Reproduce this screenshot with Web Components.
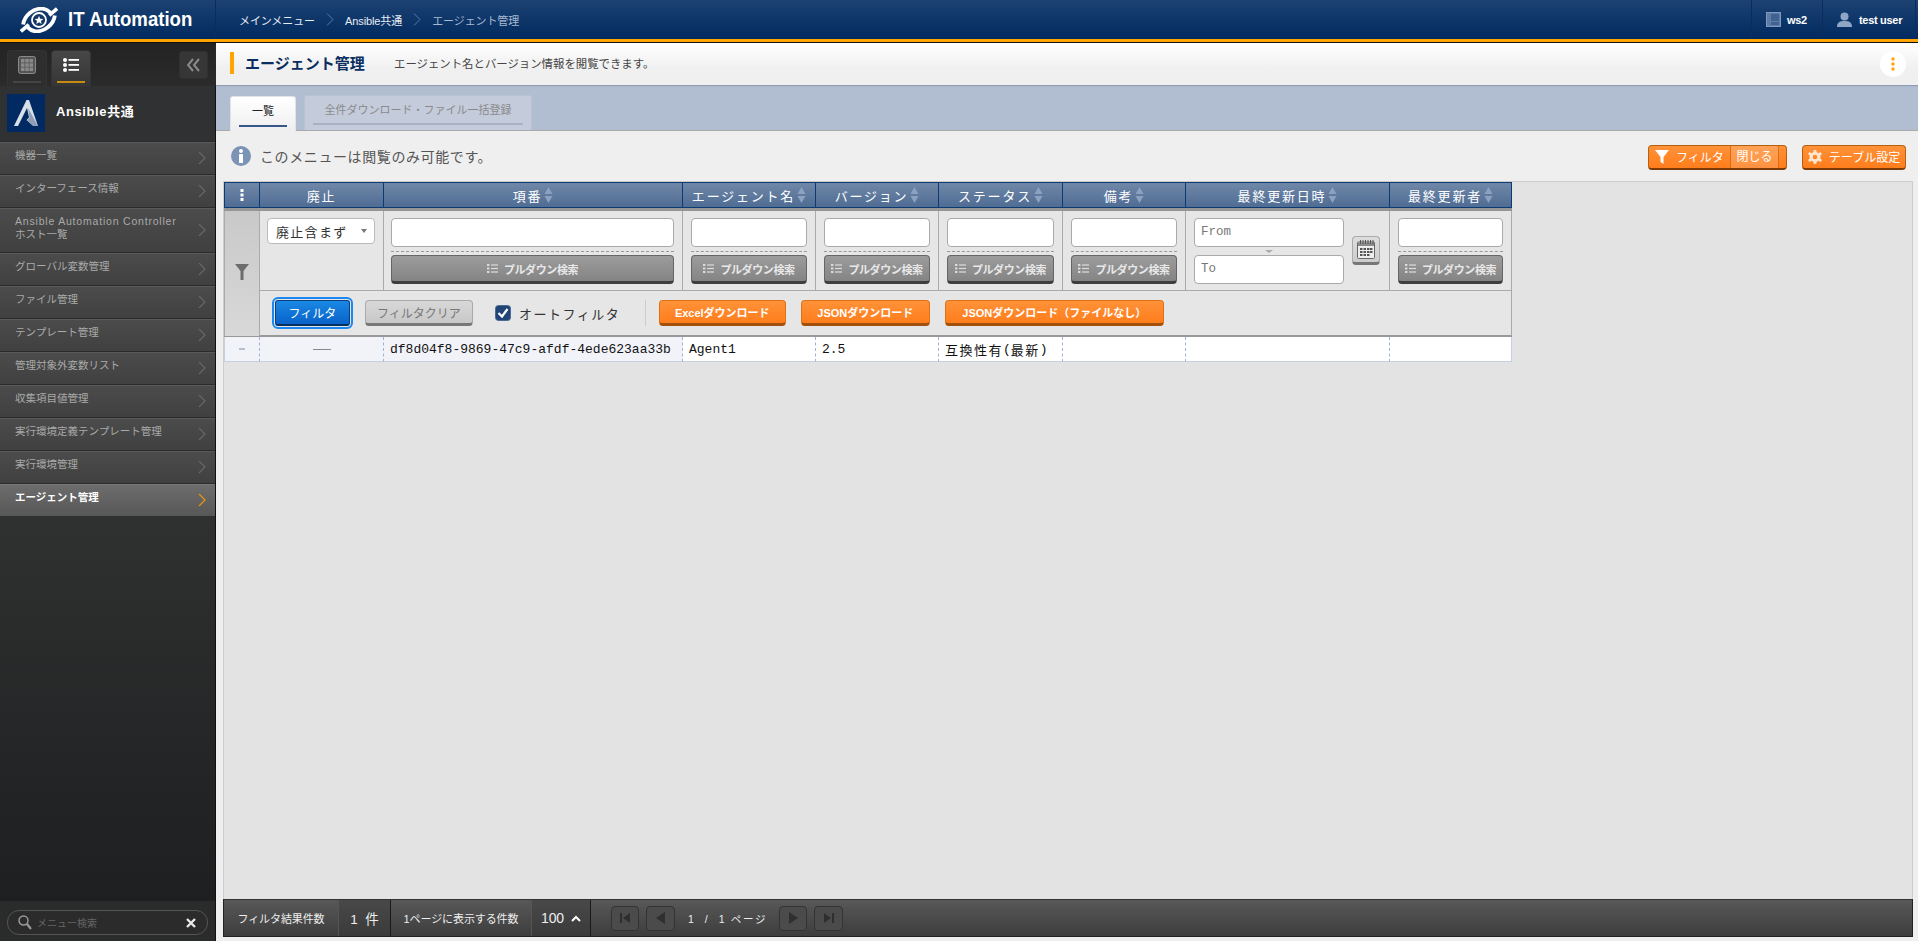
<!DOCTYPE html>
<html lang="ja"><head><meta charset="utf-8"><style>
html,body{margin:0;height:941px;overflow:hidden;background:#efefef}
body{font-family:"Liberation Sans","Noto Sans CJK JP",sans-serif}
</style></head><body>
<ita-app></ita-app>
<script>
const SANS='"Liberation Sans","Noto Sans CJK JP",sans-serif';
const MONO='"Liberation Mono","Noto Sans CJK JP",monospace';
function el(name,html,css){
  customElements.define(name,class extends HTMLElement{
    constructor(){super();const r=this.attachShadow({mode:'open'});
      r.innerHTML='<style>'+css+'</style>'+html;}
  });
}
const chev=c=>`<svg width="8" height="13" viewBox="0 0 8 13" fill="none" stroke="${c}" stroke-width="1"><path d="M1 .5 L7 6.500 L1 12.500"/></svg>`;
const pullIcon=`<svg width="11" height="11" viewBox="0 0 11 11" fill="#dcdcdc"><rect x="0" y="1" width="2.400" height="2"/><rect x="0" y="4.500" width="2.400" height="2"/><rect x="0" y="8" width="2.400" height="2"/><rect x="4" y="1.400" width="7" height="1.200"/><rect x="4" y="4.900" width="7" height="1.200"/><rect x="4" y="8.400" width="7" height="1.200"/></svg>`;
const sortIcon=`<svg width="9" height="16" viewBox="0 0 9 16" fill="#8ba2c1"><path d="M4.500 0 L8.500 7 H.5 Z M4.500 16 L8.500 9 H.5 Z"/></svg>`;

el('ita-btn',`<slot></slot>`,`
:host{display:inline-flex;align-items:center;justify-content:center;box-sizing:border-box;height:26px;border-radius:4px;font:bold 11px ${SANS};color:#fff;white-space:nowrap;gap:6px;flex:none;letter-spacing:0;
 background:linear-gradient(#ff9238,#ff7d1c);border:1px solid #e07015;border-bottom:3px solid #a3500c}
:host([kind=blue]){background:linear-gradient(#1a88e4,#0963c9);border:1px solid #0a3d82;border-bottom:2px solid #06305f;outline:2px solid #1a88f0;outline-offset:1px;font-weight:normal;font-size:12px;border-radius:3px}
:host([kind=gray]){background:linear-gradient(#d8d8d8,#c8c8c8);border:1px solid #aaa;border-bottom:3px solid #777;color:#777;font-weight:normal;font-size:12px}
:host([kind=pull]){display:flex;height:29px;background:linear-gradient(#9c9c9c,#848484);border:1px solid #666;border-bottom:3px solid #3e3e3e;color:#e8e8e8;letter-spacing:-.4px}
`);

el('ita-header',`
<div class="bar">
<div class="logo">
<svg width="38" height="26" viewBox="3 1.500 32 23"><g fill="none" stroke="#fff" stroke-linecap="butt"><path d="M5 17 C6 9 14 2.500 22 3 C25 3.200 27 4.500 29 6.500" stroke-width="3.400"/><path d="M33 9 C32 17 24 23.500 16 23 C13 22.800 11 21.500 9 19.500" stroke-width="3.400"/><path d="M28 9 L35 3" stroke-width="3.200"/><path d="M10 17 L3 23" stroke-width="3.200"/></g><circle cx="19" cy="13" r="6.200" fill="#143766" stroke="#fff" stroke-width="1.600"/><path d="M19 9.300 L20 12 L22.800 12.200 L20.700 13.900 L21.400 16.600 L19 15.100 L16.600 16.600 L17.300 13.900 L15.200 12.200 L18 12 Z" fill="#fff"/></svg>
<b>IT Automation</b></div>
<nav><span>メインメニュー</span>${chev('#5d7aa5')}<span>Ansible共通</span>${chev('#5d7aa5')}<span class="cur">エージェント管理</span></nav>
<div class="r"><span class="it w"><svg width="15" height="15" viewBox="0 0 15 15"><rect x=".5" y=".5" width="14" height="14" fill="#5d7ca6" stroke="#7f9abd"/><rect x="5" y="2" width="8" height="7" fill="#3f6290"/><rect x="5" y="10" width="8" height="3" fill="#3f6290"/></svg>ws2</span>
<span class="it u"><svg width="15" height="15" viewBox="0 0 15 15" fill="#8fa6c6"><circle cx="7.500" cy="4.500" r="4"/><path d="M0 15 C0 10 3 9 7.500 9 C12 9 15 10 15 15 Z"/></svg>test user</span></div>
</div>`,`
:host{display:block;height:43px;box-sizing:border-box;border-bottom:1px solid #111;font:11px ${SANS};color:#fff;flex:none}
.bar{display:flex;height:39px;background:linear-gradient(#1d4272,#002a60);border-bottom:3px solid #ffa500}
.logo{width:216px;box-sizing:border-box;padding-left:20px;display:flex;align-items:center;gap:10px;border-right:1px solid #0e2c58}
.logo b{font:bold 20px "Liberation Sans";transform:scaleX(.93);transform-origin:left;white-space:nowrap}
nav{flex:1;display:flex;align-items:center;padding-left:23px;color:#e8edf5;letter-spacing:-.1px}
nav svg{margin:0 11px}
nav .cur{color:#a9b9d0}
.r{display:flex}
.it{display:flex;align-items:center;gap:7px;box-sizing:border-box;border-left:1px solid #0e2c58;font:bold 11px ${SANS};letter-spacing:-.3px}
.w{width:71px;padding-left:14px}.w svg{margin-right:-1px}.u{width:94px;padding-left:14px;border-right:1px solid #0e2c58;margin-right:2px}
`);

el('ita-menu-item',`<span class="t"><slot></slot></span><svg class="c" width="8" height="13" viewBox="0 0 8 13" fill="none" stroke-width="1.200"><path d="M1 .5 L7 6.500 L1 12.500"/></svg>`,`
:host{display:flex;align-items:center;box-sizing:border-box;min-height:33px;padding:6.500px 9px 11.500px 15px;border-top:1px solid #2b2b2b;box-shadow:inset 0 1px 0 #5a5a5a;
 background:linear-gradient(#4b4c4b,#3f403f);color:#aaa;font:10.500px/13px ${SANS}}
.t{flex:1}
.c{stroke:#666;flex:none;transform:translateY(2.500px)}
:host([active]){background:linear-gradient(#6c6d6c,#565756);color:#fff;font-weight:bold;box-shadow:inset 0 1px 0 #777,0 2px 0 #333}
:host([active]) .c{stroke:#e8960c}
`);

el('ita-sidebar',`
<div class="tabs">
<div class="tab"><svg width="18" height="18" viewBox="0 0 18 18"><rect x=".5" y=".5" width="17" height="17" rx="2" fill="#555" stroke="#8a8a8a"/><g fill="#8a8a8a"><rect x="3" y="3" width="3.500" height="3.500"/><rect x="7.300" y="3" width="3.500" height="3.500"/><rect x="11.500" y="3" width="3.500" height="3.500"/><rect x="3" y="7.300" width="3.500" height="3.500"/><rect x="7.300" y="7.300" width="3.500" height="3.500"/><rect x="11.500" y="7.300" width="3.500" height="3.500"/><rect x="3" y="11.500" width="3.500" height="3.500"/><rect x="7.300" y="11.500" width="3.500" height="3.500"/><rect x="11.500" y="11.500" width="3.500" height="3.500"/></g></svg></div>
<div class="tab on"><svg width="16" height="14" viewBox="0 0 16 14" fill="#fff"><circle cx="2" cy="2" r="2"/><circle cx="2" cy="7" r="2"/><circle cx="2" cy="12" r="2"/><rect x="5.500" y="1" width="10.500" height="1.800"/><rect x="5.500" y="6" width="10.500" height="1.800"/><rect x="5.500" y="11" width="10.500" height="1.800"/></svg></div>
<div class="coll"><svg width="13" height="14" viewBox="0 0 13 14" fill="none" stroke="#8a8a8a" stroke-width="2"><path d="M6 1 L1 7 L6 13 M12 1 L7 7 L12 13"/></svg></div>
</div>
<div class="group"><div class="ic"><svg width="24" height="26" viewBox="0 0 24 26"><path d="M12.500 0 L15 0 L24 26 L19.500 26 L12.500 20 L15 17.500 L13 8 L4 26 L0 26 Z" fill="#d8dfe9"/><path d="M14 8 L24 26 L19 26 L13 20 L15.500 18 Z" fill="#8f9fb8"/></svg></div><b>Ansible共通</b></div>
<div class="menu"><slot></slot></div>
<div class="fill"></div>
<div class="search"><div class="box"><svg width="14" height="15" viewBox="0 0 14 15" fill="none" stroke="#999" stroke-width="1.500"><circle cx="5.500" cy="5.500" r="4.500"/><path d="M9 9 L13 14" stroke-width="2.200"/></svg><span>メニュー検索</span><svg width="10" height="10" viewBox="0 0 10 10" stroke="#e8e8e8" stroke-width="2.400"><path d="M1 1 L9 9 M9 1 L1 9"/></svg></div></div>
`,`
:host{display:flex;flex-direction:column;width:215px;flex:none;background:#2a2b2b;border-right:1px solid #111;font:11px ${SANS}}
.tabs{display:flex;height:43px;box-sizing:border-box;padding:7px 7px 0 7px;gap:4px;background:linear-gradient(#232323,#2b2b2b);flex:none}
.tab{width:40px;height:36px;box-sizing:border-box;border:1px solid #333;border-bottom:0;border-radius:4px 4px 0 0;background:#2e2e2e;display:flex;align-items:center;justify-content:center;padding-bottom:7px;position:relative}
.tab::after{content:"";position:absolute;left:5px;right:5px;bottom:3px;height:2px;background:#444}
.tab.on{background:linear-gradient(#474747,#363636)}
.tab.on::after{background:#c88a10}
.coll{margin-left:auto;width:29px;height:28px;margin-top:1px;background:#363636;border:1px solid #303030;border-radius:3px;box-sizing:border-box;display:flex;align-items:center;justify-content:center}
.group{display:flex;align-items:center;height:55px;box-sizing:border-box;padding-left:7px;gap:11px;background:#303132;color:#fff;font-size:13px;flex:none}
.group b{letter-spacing:.6px;margin-top:-6px}
.ic{width:38px;height:38px;background:#012a63;display:flex;align-items:center;justify-content:center;margin-top:-2px}
.menu{flex:none}
.fill{flex:1;background:linear-gradient(#2f3030,#1e1f20)}
.search{height:40px;box-sizing:border-box;background:#2a2b2b;padding:9px 7px 6px;flex:none}
.box{height:25px;box-sizing:border-box;border:1px solid #555;border-radius:12px;background:#2b2b2b;display:flex;align-items:center;padding:0 11px 0 10px;gap:5px;color:#666;font-size:10px}
.box span{flex:1}
`);

el('ita-title',`<i></i><h1>エージェント管理</h1><p>エージェント名とバージョン情報を閲覧できます。</p><div class="k"><svg width="4" height="14" viewBox="0 0 4 14" fill="#ffa500"><circle cx="2" cy="2" r="1.700"/><circle cx="2" cy="7" r="1.700"/><circle cx="2" cy="12" r="1.700"/></svg></div>`,`
:host{display:flex;align-items:center;height:42px;box-sizing:border-box;flex:none;padding:0 12px 0 14px;background:linear-gradient(#fff,#f0f0f0 60%);box-shadow:0 1px 1px #8f9cb3;position:relative}
i{width:4px;height:22px;background:#ffa500;flex:none;margin-right:11px;margin-top:-2px}
h1{margin:-3px 0 0;font:bold 15px ${SANS};color:#0a2e60;width:149px}
p{margin:-2px 0 0;font:11.400px ${SANS};color:#444;flex:1}
.k{width:26px;height:26px;border-radius:50%;background:#fff;display:flex;align-items:center;justify-content:center}
`);

el('ita-tabs',`<div class="tb a"><span>一覧</span></div><div class="tb"><span>全件ダウンロード・ファイル一括登録</span></div>`,`
:host{display:flex;height:46px;box-sizing:border-box;flex:none;background:#b1bdd0;border-bottom:1px solid #aaa;padding:10px 0 0 14px;gap:8px;align-items:flex-end;font:11px ${SANS}}
.tb{height:35px;width:228px;box-sizing:border-box;border-radius:3px 3px 0 0;background:#c4ccdb;color:#8a8a8a;padding:0 8px;border:1px solid #bac3d4;border-bottom:0}
.tb span{display:block;text-align:center;height:29px;line-height:29px;border-bottom:2px solid #a9b2c3;box-sizing:border-box}
.a{width:66px;background:linear-gradient(#fff,#eee);color:#222;border-color:#dfe3ea;position:relative;top:1px}
.a span{border-bottom:2px solid #37568a;height:30px;line-height:29px}
`);

el('ita-info',`<svg width="20" height="20" viewBox="0 0 20 20"><circle cx="10" cy="10" r="10" fill="#7b93b5"/><circle cx="10" cy="5" r="2" fill="#fff"/><rect x="8" y="8" width="4" height="9" rx=".5" fill="#fff"/></svg><span>このメニューは閲覧のみ可能です。</span><div class="sp"></div>
<ita-btn class="b1"><svg width="14" height="14" viewBox="0 0 14 14" fill="#fff"><path d="M0 0 H14 L8.500 7 V14 L5.500 12 V7 Z"/></svg><span class="f">フィルタ</span><span class="cl">閉じる</span></ita-btn>
<ita-btn class="b2"><svg width="14" height="14" viewBox="0 0 24 24" fill="#ffe7cf"><path d="M10 0 H14 L15 4 L18 5.500 L21.500 3.500 L24 7 L21 9.500 L21.500 12 L21 14.500 L24 17 L21.500 20.500 L18 18.500 L15 20 L14 24 H10 L9 20 L6 18.500 L2.500 20.500 L0 17 L3 14.500 L2.500 12 L3 9.500 L0 7 L2.500 3.500 L6 5.500 L9 4 Z M12 8 A4 4 0 1 0 12 16 A4 4 0 1 0 12 8 Z" fill-rule="evenodd"/></svg><span>テーブル設定</span></ita-btn>`,`
:host{display:flex;align-items:center;height:50px;box-sizing:border-box;flex:none;padding:0 12px 1px 15px;font:14px ${SANS};color:#555}
svg{flex:none}
:host>span{margin-left:9px;letter-spacing:.6px}
.sp{flex:1}
ita-btn{font-weight:normal;font-size:12px;height:25px;border-color:#b5600f;border-bottom:2px solid #7b3a06;margin-top:3px}
.b1{width:139px;justify-content:flex-start;padding-left:6px;gap:7px;padding-right:7px}
.f{width:47px}.cl{width:50px;height:22px;line-height:22px;text-align:center;background:rgba(255,255,255,.16);border-left:1px solid #d86f15;border-right:1px solid #d86f15}
.b2{width:104px;margin-left:15px;gap:7px}
`);

const cols=`36px 124px 299px 133px 123px 124px 123px 204px 122px`;
const th=(t,s=1)=>`<div class="th"><span>${t}</span>${s?sortIcon:''}</div>`;
const pull=(c='')=>`<div class="fc ${c}"><div class="inp"></div><div class="dash"></div><ita-btn kind="pull">${pullIcon}<span>プルダウン検索</span></ita-btn></div>`;
el('ita-table',`
<div class="g">
<div class="th"><svg width="4" height="12" viewBox="0 0 4 12" fill="#fff"><rect width="3" height="3" x=".5" y="0"/><rect width="3" height="3" x=".5" y="4.500"/><rect width="3" height="3" x=".5" y="9"/></svg></div>
${th('廃止',0)}${th('項番')}${th('エージェント名')}${th('バージョン')}${th('ステータス')}${th('備考')}${th('最終更新日時')}${th('最終更新者')}
<div class="stripe"></div>
<div class="side"><svg width="14" height="16" viewBox="0 0 14 16" fill="#6d6d6d"><path d="M0 0 H14 L8.500 7 V16 H5.500 V7 Z"/></svg></div>
<div class="fc sel"><div class="select"><span>廃止含まず</span><svg width="6" height="4" viewBox="0 0 6 4" fill="#777"><path d="M0 0 H6 L3 4 Z"/></svg></div></div>
${pull('sel')}${pull()}${pull()}${pull()}${pull()}
<div class="fc date"><div class="dl"><div class="inp ph">From</div><div class="tri"></div><div class="inp ph">To</div></div><div class="cal"><svg width="18" height="19" viewBox="0 0 18 19"><rect x=".5" y="2" width="17" height="16.500" rx="1" fill="#eee" stroke="#666"/><rect x="1" y="2.500" width="16" height="3.500" fill="#8b8b8b"/><g stroke="#555"><path d="M3.500 0 V4 M6 0 V4 M8.500 0 V4 M11 0 V4 M13.500 0 V4 M16 0 V4" stroke-width="1"/></g><g fill="#555"><rect x="3" y="8" width="2.500" height="2"/><rect x="6.500" y="8" width="2.500" height="2"/><rect x="10" y="8" width="2.500" height="2"/><rect x="13" y="8" width="2.500" height="2"/><rect x="3" y="11" width="2.500" height="2"/><rect x="6.500" y="11" width="2.500" height="2"/><rect x="10" y="11" width="2.500" height="2"/><rect x="13" y="11" width="2.500" height="2"/><rect x="3" y="14" width="2.500" height="2"/><rect x="6.500" y="14" width="2.500" height="2"/><rect x="10" y="14" width="2.500" height="2"/></g></svg></div></div>
${pull()}
<div class="act">
<ita-btn kind="blue" style="width:75px">フィルタ</ita-btn>
<ita-btn kind="gray" style="width:108px;margin-left:15px">フィルタクリア</ita-btn>
<label><svg width="16" height="16" viewBox="0 0 16 16"><rect x=".5" y=".5" width="15" height="15" rx="3" fill="#1e4478" stroke="#4d6a94"/><path d="M3.500 8 L7 11.500 L12.500 4" fill="none" stroke="#fff" stroke-width="2.200"/></svg><span>オートフィルタ</span></label>
<i></i>
<ita-btn style="width:127px">Excelダウンロード</ita-btn>
<ita-btn style="width:129px;margin-left:15px">JSONダウンロード</ita-btn>
<ita-btn style="width:219px;margin-left:15px">JSONダウンロード（ファイルなし）</ita-btn>
</div>
<div class="line"></div>
<div class="td alt c"><b class="d1"></b></div><div class="td alt c"><b class="d2"></b></div>
<div class="td alt m">df8d04f8-9869-47c9-afdf-4ede623aa33b</div>
<div class="td m">Agent1</div><div class="td m">2.5</div>
<div class="td st"><span>互換性有</span><span class="m">(</span><span>最新</span><span class="m">)</span></div>
<div class="td"></div><div class="td"></div><div class="td"></div>
</div>`,`
:host{display:block;font:13px ${MONO};letter-spacing:1.300px}
.g{display:grid;grid-template-columns:${cols};grid-template-rows:26px 3px 80px 45px 1px 25px;width:1288px}
.th{display:flex;align-items:center;justify-content:center;gap:2px;color:#fff;background:linear-gradient(#7088a8,#4f6c93);border:1px solid #0c3a72;border-left:0;box-sizing:border-box;white-space:nowrap;letter-spacing:1.800px}
.th:first-child{border-left:1px solid #0c3a72}
.stripe{grid-column:1/-1;background:#969696}
.side{grid-row:3/5;background:linear-gradient(#c9c9c9,#d8d8d8);border-right:1px solid #aaa;border-left:1px solid #aaa;display:flex;align-items:center;justify-content:center;padding-bottom:4px;box-sizing:border-box}
.fc{background:#e6e6e6;border-right:1px solid #aaa;border-bottom:1px solid #aaa;box-sizing:border-box;padding:7px 8px 0 8px;display:flex;flex-direction:column}
.sel{padding-left:7px}
.inp{height:29px;box-sizing:border-box;background:#fff;border:1px solid #aaa;border-radius:4px;flex:none;letter-spacing:0}
.ph{font:12.500px/27px ${MONO};color:#777;padding-left:6px;letter-spacing:0}
.dash{border-top:1px dashed #999;margin:4px 0 3px;height:0;flex:none}
.select{height:26px;box-sizing:border-box;background:#fff;border:1px solid #bbb;border-radius:4px;display:flex;align-items:center;justify-content:space-between;padding:0 7px 0 8px;color:#333}
.date{flex-direction:row;align-items:center;padding-top:0;gap:8px}
.dl{width:150px;padding-top:7px;align-self:flex-start;display:flex;flex-direction:column}
.tri{width:0;height:0;border:4px solid transparent;border-top:3px solid #aaa;border-bottom:0;align-self:center;margin:2.500px 0}
.cal{width:28px;height:29px;box-sizing:border-box;border:1px solid #aaa;border-bottom:3px solid #777;border-radius:4px;background:linear-gradient(#ddd,#ccc);display:flex;align-items:center;justify-content:center}
.act{grid-column:2/-1;background:#e6e6e6;border-right:1px solid #aaa;box-sizing:border-box;display:flex;align-items:center;padding:0 0 0 15px;border-bottom:1px solid #999}
label{display:flex;align-items:center;gap:8px;margin-left:22px;color:#333;letter-spacing:1.500px}
.act i{width:1px;height:26px;background:#ccc;margin:0 13px 0 24.500px;flex:none}
.line{grid-column:1/-1;background:#999}
.td{background:#fff;border-right:1px dashed #9fb4d0;border-bottom:1px solid #c5d0e0;box-sizing:border-box;padding:0 5px 0 6px;display:flex;align-items:center;color:#111;white-space:nowrap}
.td:nth-last-child(9){border-left:1px solid #c5d0e0}
.td:last-child{border-right:1px solid #c5d0e0}
.alt{background:#f1f3f9}
.c{justify-content:center;padding:0}
.m{font-family:${MONO};letter-spacing:0}
.st{letter-spacing:1.500px}
.d1{width:6px;height:2px;background:#b6c0d0}.d2{width:18px;height:1px;background:#888}
`);

el('ita-pager',`
<div class="c l" style="width:114px">フィルタ結果件数</div><div class="c n" style="width:53px">1&nbsp;&nbsp;件</div>
<div class="c l" style="width:140px">1ページに表示する件数</div><div class="c n h" style="width:60px">100<svg width="10" height="7" viewBox="0 0 10 7" fill="none" stroke="#fff" stroke-width="2"><path d="M1 6 L5 2 L9 6"/></svg></div>
<div class="pg">
<span class="b"><svg width="12" height="12" viewBox="0 0 12 12" fill="#2f2f2f"><rect x="1" y="1" width="2" height="10"/><path d="M11 1 V11 L4 6 Z"/></svg></span>
<span class="b b2"><svg width="10" height="12" viewBox="0 0 10 12" fill="#2f2f2f"><path d="M9 0 V12 L0 6 Z"/></svg></span>
<span class="t">1&nbsp; /&nbsp; 1 ページ</span>
<span class="b"><svg width="10" height="12" viewBox="0 0 10 12" fill="#2f2f2f"><path d="M1 0 V12 L10 6 Z"/></svg></span>
<span class="b b2"><svg width="12" height="12" viewBox="0 0 12 12" fill="#2f2f2f"><path d="M1 1 V11 L8 6 Z"/><rect x="9" y="1" width="2" height="10"/></svg></span>
</div>`,`
:host{display:flex;height:38px;flex:none;box-sizing:border-box;border:1px solid #222;border-top:1px solid #333;color:#eee;font:11px ${SANS};background:linear-gradient(#575857,#3c3d3c)}
.c{display:flex;align-items:center;justify-content:center;box-sizing:border-box;height:100%;white-space:nowrap;flex:none;letter-spacing:-.1px}
.n{background:linear-gradient(#484948,#393a39);border-left:1px solid #555;font-size:13.500px;letter-spacing:0;border-right:1px solid #1a1a1a}
.h{font-size:14px;gap:7px;letter-spacing:-.2px}
.pg{display:flex;align-items:center;padding-left:20px}
.b{width:28px;height:25px;box-sizing:border-box;border:1px solid #333;border-radius:4px;display:flex;align-items:center;justify-content:center;background:#4a4b4a;margin-right:7px}
.b2{margin-right:0;width:29px}
.t{width:104px;padding-left:13px;box-sizing:border-box;font-size:10.500px;letter-spacing:1.700px;white-space:nowrap}
`);

el('ita-app',`
<ita-header></ita-header>
<div class="body">
<ita-sidebar>
<ita-menu-item>機器一覧</ita-menu-item>
<ita-menu-item>インターフェース情報</ita-menu-item>
<ita-menu-item><span style="letter-spacing:.8px">Ansible Automation Controller</span><br>ホスト一覧</ita-menu-item>
<ita-menu-item>グローバル変数管理</ita-menu-item>
<ita-menu-item>ファイル管理</ita-menu-item>
<ita-menu-item>テンプレート管理</ita-menu-item>
<ita-menu-item>管理対象外変数リスト</ita-menu-item>
<ita-menu-item>収集項目値管理</ita-menu-item>
<ita-menu-item>実行環境定義テンプレート管理</ita-menu-item>
<ita-menu-item>実行環境管理</ita-menu-item>
<ita-menu-item active>エージェント管理</ita-menu-item>
</ita-sidebar>
<main>
<ita-title></ita-title>
<ita-tabs></ita-tabs>
<ita-info></ita-info>
<div class="frame"><ita-table></ita-table></div>
<ita-pager></ita-pager>
<div class="end"></div>
</main>
</div>`,`
:host{display:flex;flex-direction:column;height:941px}
.body{flex:1;display:flex;min-height:0}
main{flex:1;min-width:0;display:flex;flex-direction:column;background:#efefef}
.frame{flex:1;margin:0 5px 0 7px;background:#e3e3e3;border:1px solid #ccc;border-bottom:0;min-height:0;box-sizing:border-box}
ita-pager{margin:0 5px 0 7px}
.end{height:4px;flex:none}
`);
</script>
</body></html>
